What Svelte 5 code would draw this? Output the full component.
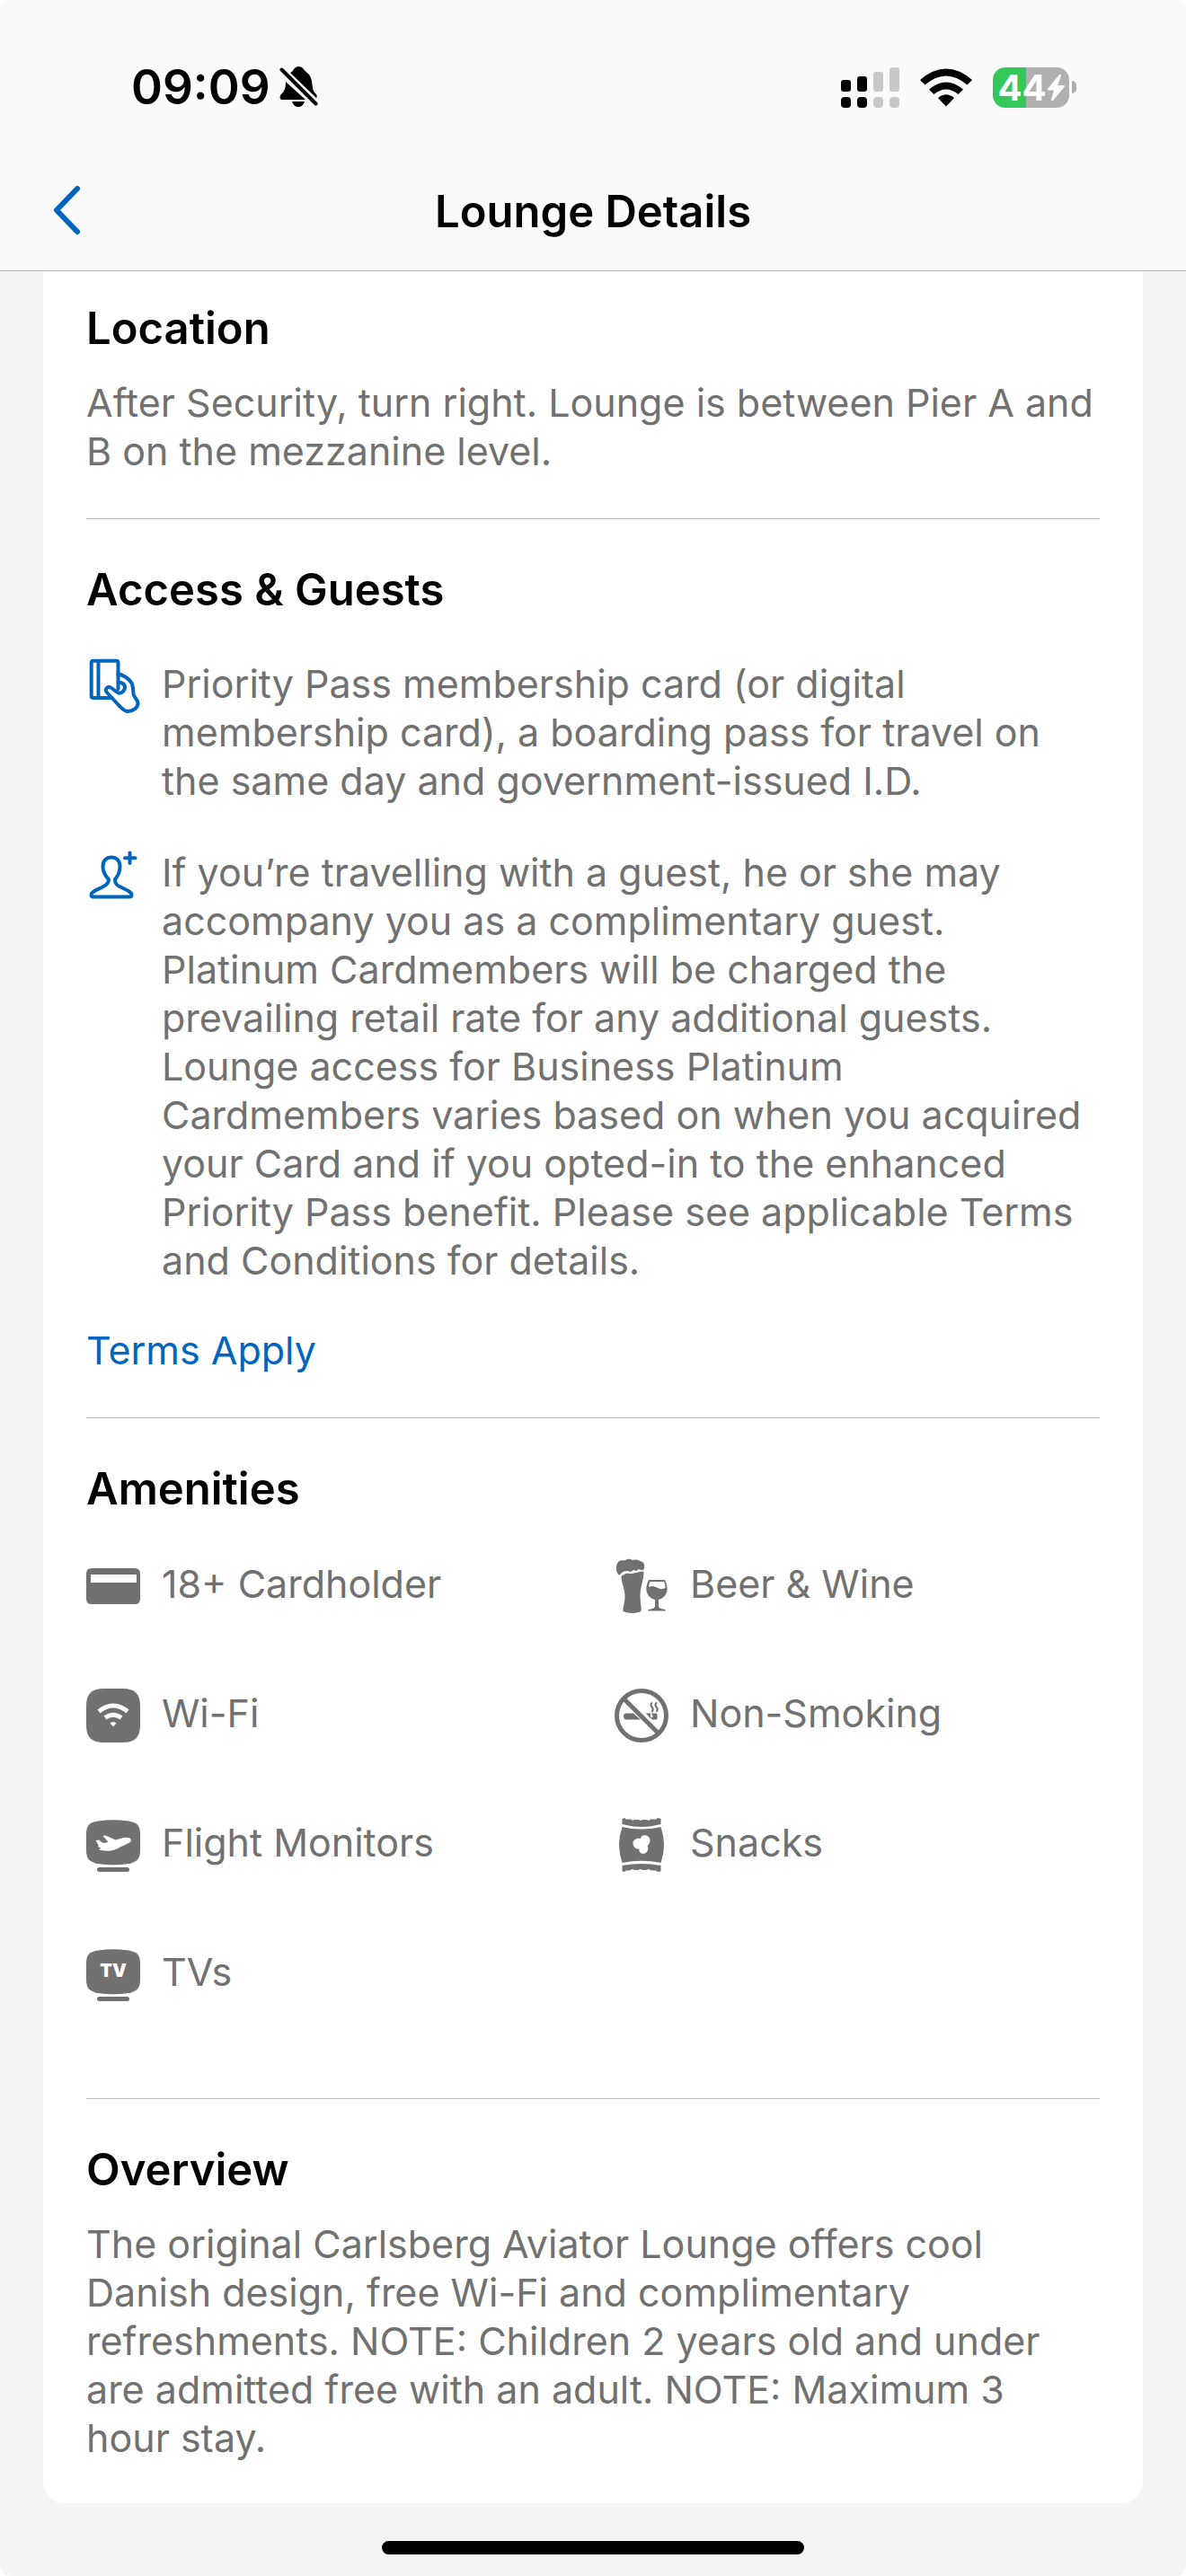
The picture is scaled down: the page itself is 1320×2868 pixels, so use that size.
<script>
    const lounge = {
        location: "After Security, turn right. Lounge is between Pier A and B on the mezzanine level.",
        overview: "The original Carlsberg Aviator Lounge offers cool Danish design, free Wi-Fi and complimentary refreshments. NOTE: Children 2 years old and under are admitted free with an adult. NOTE: Maximum 3 hour\u00a0stay.",
    };

    const access = [
        {
            icon: "pass",
            text: "Priority Pass membership card (or digital membership card), a boarding pass for travel on the same day and government-issued I.D.",
        },
        {
            icon: "guest",
            text: "If you’re travelling with a guest, he or she may accompany you as a complimentary guest. Platinum Cardmembers will be charged the prevailing retail rate for any additional guests. Lounge access for Business Platinum Cardmembers varies based on when you acquired your Card and if you opted-in to the enhanced Priority Pass benefit. Please see applicable Terms and Conditions for details.",
        },
    ];

    const amenities = [
        { icon: "card", label: "18+ Cardholder" },
        { icon: "drinks", label: "Beer & Wine" },
        { icon: "wifi", label: "Wi-Fi" },
        { icon: "nosmoking", label: "Non-Smoking" },
        { icon: "flight", label: "Flight Monitors" },
        { icon: "snacks", label: "Snacks" },
        { icon: "tv", label: "TVs" },
    ];

    const battery = 44;
</script>

{#snippet icon(name, viewBox = "0 0 60 60")}
    <svg class="icon" {viewBox} aria-hidden="true">
        {#if name === "pass"}
            <g class="line">
                <path d="M35.500 20V8q0-2.300-2.300-2.300H8Q5.700 5.700 5.700 8v36.700Q5.700 47 8 47h19M13.500 6v41" />
                <path d="M35.500 20c7 2.500 11 5 13.500 8.500 4 4 3 10 3.500 14 .5 4 5.500 7 5 11C57 58 52 62 46.500 62c-4 0-6.500-3-10-6.500L23 41c-3-4 1-8 5-5l6 4.500c4 3 9-1 9-5.500 0-3-3-5-7.500-5.500M35.500 20v17" />
            </g>
        {:else if name === "guest"}
            <g class="line">
                <path d="M25 39c-3-3-6.500-7.500-6.500-14 0-6.500 3.500-10.500 9.500-10.500S37.500 18.500 37.500 25c0 6.500-2.500 10.500-5.500 14 0 5 2 6.500 6 8.500 7 3.500 12.500 5 12.500 9 0 1.500-1 2-2.500 2H8c-1.500 0-2.500-.5-2.500-2 0-4 6-5.500 13.500-9.500 4-2 6-4 6-8z" />
                <path d="M48.500 9.500v11.500M43 15.300h11.500" />
            </g>
        {:else if name === "card"}
            <path fill-rule="evenodd" d="M6 10h48q6 0 6 6v28q0 6-6 6H6q-6 0-6-6V16q0-6 6-6zM5 17v9h51v-9z" />
        {:else if name === "drinks"}
            <path d="M3 15C1 11 2 6 4 3c3-3 6-1 8-2 3-2 6-1 8 0 4-1 7 0 8 1 4 0 6 4 5 7 0 2-1 4-3 3l-3-1-3 2-3-1-3 2-4-1c-4 0-6 2-8 4-1 1-2 0-3-2z" />
            <path d="M7.500 19c4-3 5-3.500 10-3 4 0 8-2 15-2.500 0 9-4 18-4 27 0 7 1.500 12 1 17.500-5 2.500-15 2.500-20 0-.5-5 2-10 2-16 0-9-4-16-4-23z" />
            <path fill-rule="evenodd" d="M38 23h18c6 12 1 20-7 22v8c1 2 4 2 7 3 1 0 1 1.500 0 1.500H38c-1 0-1-1.500 0-1.500 3-1 6-1 7-3v-8c-8-2-13-10-7-22zm1.500 2c-1 2-1.500 4-1.500 6 8-4 10 5 18.500 1 0-2.500-.5-5-1.500-7z" />
        {:else if name === "wifi"}
            <path d="M19 0h22c13 0 19 6 19 19v22c0 13-6 19-19 19H19C6 60 0 54 0 41V19C0 6 6 0 19 0z" />
            <path class="cut" d="M14 25.500q16-13 32 0M21 32.500q9-6.500 18 0" />
            <path fill="#fff" d="M26.500 38.500q3.500-3 7 0L30 42.500z" />
        {:else if name === "nosmoking"}
            <circle cx="30" cy="30" r="27.500" fill="none" stroke="currentColor" stroke-width="5" />
            <path d="M12 27.500h9l8 7H12q-2-.5-2-3.500t2-3.500zM35 27.500h5v6zM41 27.500h5q1.500 0 1.500 1.500v4q0 1.500-1.500 1.500h-4l-2-2 3-1z" />
            <path d="M42 15.500q-3 2.500-.5 5t0 5.500M47 15.500q-3 2.500-.5 5t0 5.500" fill="none" stroke="currentColor" stroke-width="2" />
            <path d="M10 11l39 39" stroke="currentColor" stroke-width="5" />
        {:else if name === "flight"}
            <path d="M13 3.500q17-2.500 34 0C57 5 60 9 60 18v18c0 9-3 13-13 15q-17 2.500-34 0C3 49 0 45 0 36V18C0 9 3 5 13 3.500z" />
            <rect x="12" y="55" width="36" height="5" rx="2.500" />
            <path fill="#fff" d="M10.500 25l3.500-.5 5 3.500 5.500-1-6-7 3-.5 11 5 9-2.500c4-.5 8 0 8.500 2.500 0 2-2 3-4 4-7 3-12 7-19 8-5 .5-10 0-13-1.500l2.500-1.500-3-1v-2.500z" />
        {:else if name === "snacks"}
            <path d="M8.500 1l3-1 1 1.500h6L20 3l2-1h5l2 1 2-1h5l2 1 2-1.500h6L48 0l3.500 1v6Q30 13 8.500 7z" />
            <path fill-rule="evenodd" d="M8.500 10q21.500 5 43 0 7 20 0 40-21.500-4.500-43 0-7-20 0-40zM29 23c-5-1-9 2-8.500 6s4 6 7 5.500c-1 4 3 6 6 5s5-5 3-8.500c4-3 4-9 0-11s-7 0-7.500 3z" />
            <path d="M8.500 53Q30 49 51.500 53v6.500L48 60l-2-1.500h-5L38 57l-3 1h-4l-2-1-3 1h-4l-2-1-4 1.500h-3L11 60l-2.500-.5z" />
        {:else if name === "tv"}
            <path d="M13 3.500q17-2.500 34 0C57 5 60 9 60 18v18c0 9-3 13-13 15q-17 2.500-34 0C3 49 0 45 0 36V18C0 9 3 5 13 3.500z" />
            <rect x="12" y="55" width="36" height="5" rx="2.500" />
            <text x="30" y="33" text-anchor="middle">TV</text>
        {/if}
    </svg>
{/snippet}

<div class="screen">
    <header>
        <div class="status">
            <div class="clock">
                <span>09:09</span>
                <svg width="44" height="48" viewBox="0 0 44 48" aria-label="Silent mode">
                    <path d="M12 8c2-1 3-2 4-4 3-4 8-4 11 0 1 2 3 3 5 5 4 4 4 9 5 15 0 4 2 6 4 8 1 2 1 3 0 4zM7 18l22 20H3c-3 0-3-4-1-6 3-3 5-6 5-14zM14 40h14q-2 6-7 6t-7-6z" />
                    <path d="M3 5l38 38" stroke="#fafafa" stroke-width="8" />
                    <path d="M2.500 4.500l38 38" stroke="#000" stroke-width="4" stroke-linecap="round" />
                </svg>
            </div>
            <div class="signals">
                <svg width="65" height="45" viewBox="0 0 65 45" aria-label="Signal">
                    <rect x="0" y="14" width="11" height="13" rx="3" />
                    <rect x="0" y="33" width="11" height="12" rx="4" />
                    <rect x="18" y="10" width="11" height="17" rx="3" />
                    <rect x="18" y="33" width="11" height="12" rx="4" />
                    <g fill="#c8c8c8">
                        <rect x="36" y="5" width="11" height="22" rx="3" />
                        <rect x="36" y="33" width="11" height="12" rx="4" />
                        <rect x="54" y="0" width="11" height="27" rx="3" />
                        <rect x="54" y="33" width="11" height="12" rx="4" />
                    </g>
                </svg>
                <svg width="58" height="43" viewBox="0 0 58 43" aria-label="Wi-Fi">
                    <path d="M0 13Q29-12 58 13l-5.500 5.500q-23.500-20-47 0zM10 23.500q19-16 38 0L42.500 29q-13.500-11-27 0zM20 33q9-7.500 18 0l-9 9.500z" />
                </svg>
                <div class="battery">
                    <div class="cell" style="--charge: {battery}%">
                        <span>{battery}</span>
                        <svg width="20" height="31" viewBox="0 0 20 31" aria-label="Charging">
                            <path fill="#fff" d="M14 1L1 17q-1 1.500 1 1.500h6L5 29q0 2 2 1l12.500-15q1-2-1-2H12l4-10.500Q16 0 14 1z" />
                        </svg>
                    </div>
                    <div class="cap"></div>
                </div>
            </div>
        </div>
        <nav>
            <button aria-label="Back">
                <svg width="34" height="58" viewBox="0 0 34 58">
                    <path d="M30 3L7 27l23 24" fill="none" stroke="currentColor" stroke-width="6" stroke-linecap="round" stroke-linejoin="round" />
                </svg>
            </button>
            <h1>Lounge Details</h1>
        </nav>
    </header>

    <main>
        <section class="location">
            <h2>Location</h2>
            <p>{lounge.location}</p>
        </section>

        <section class="access">
            <h2>Access &amp; Guests</h2>
            <ul>
                {#each access as item}
                    <li>
                        {@render icon(item.icon, "0 4 60 60")}
                        <p>{item.text}</p>
                    </li>
                {/each}
            </ul>
            <a href="#terms">Terms Apply</a>
        </section>

        <section class="amenities">
            <h2>Amenities</h2>
            <ul>
                {#each amenities as item}
                    <li>
                        {@render icon(item.icon)}
                        <span>{item.label}</span>
                    </li>
                {/each}
            </ul>
        </section>

        <section class="overview">
            <h2>Overview</h2>
            <p>{lounge.overview}</p>
        </section>
    </main>

    <div class="home"></div>
</div>

<style>
    :global(body) {
        margin: 0;
        background-color: #fff;
    }

    .screen {
        font-family: Inter, "Liberation Sans", sans-serif;
        font-size: 43px;
        line-height: 54px;
        color: #717171;
        background-color: #f4f4f4;
        border-radius: 12px;
        overflow: hidden;
    }

    h1, h2, p, ul {
        margin: 0;
        padding: 0;
    }

    h1, h2 {
        font-size: 49px;
        line-height: 60px;
        font-weight: 600;
        color: #000;
    }

    header {
        background-color: #fafafa;
        border-bottom: 1px solid #b2b2b2;
    }

    .status {
        display: flex;
        justify-content: space-between;
        align-items: center;
        padding: 64px 122px 0 146px;
        height: 66px;
    }

    .clock {
        display: flex;
        align-items: center;
        gap: 10px;
        font-size: 53px;
        font-weight: 600;
        color: #000;
    }

    .signals {
        display: flex;
        align-items: center;
        gap: 23px;
    }

    .battery {
        display: flex;
        align-items: center;
        gap: 3px;
    }

    .cell {
        display: flex;
        align-items: center;
        justify-content: center;
        width: 85px;
        height: 45px;
        border-radius: 14px;
        background: linear-gradient(to right, #34c759 var(--charge), #b0b0b0 var(--charge));
        color: #fff;
        font-size: 40px;
        line-height: 45px;
        font-weight: 700;
    }

    .cap {
        width: 5px;
        height: 14px;
        border-radius: 0 7px 7px 0;
        background-color: #b0b0b0;
    }

    nav {
        display: grid;
        grid-template-columns: 1fr auto 1fr;
        align-items: center;
        padding: 76px 56px 35px;
    }

    nav button {
        justify-self: start;
        display: flex;
        padding: 0;
        border: none;
        background: none;
        color: #0065bd;
    }

    main {
        margin: 0 48px;
        padding: 0 48px 46px;
        background-color: #fff;
        border-radius: 0 0 24px 24px;
    }

    section {
        padding: 49px 0 48px;
        border-bottom: 1px solid #bdbdbd;
    }

    .location {
        padding-top: 34px;
    }

    .overview {
        padding-bottom: 0;
        border-bottom: none;
    }

    h2 + p {
        margin-top: 25px;
    }

    ul {
        list-style: none;
    }

    li {
        display: flex;
        gap: 24px;
    }

    .access ul {
        display: flex;
        flex-direction: column;
        gap: 48px;
        margin: 47px 0 46px;
    }

    .amenities ul {
        display: grid;
        grid-template-columns: 1fr 1fr;
        gap: 84px 48px;
        margin: 48px 0 60px;
    }

    .icon {
        flex: none;
        width: 60px;
        height: 60px;
        fill: currentColor;
        overflow: visible;
    }

    .line {
        fill: none;
        stroke: #0065bd;
        stroke-width: 4;
        stroke-linecap: round;
        stroke-linejoin: round;
    }

    .cut {
        fill: none;
        stroke: #fff;
        stroke-width: 5;
    }

    .icon text {
        fill: #fff;
        font-size: 20px;
        font-weight: 900;
    }

    a {
        color: #0065bd;
        text-decoration: none;
    }

    .home {
        width: 470px;
        height: 15px;
        margin: 42px auto 24px;
        border-radius: 8px;
        background-color: #000;
    }
</style>
